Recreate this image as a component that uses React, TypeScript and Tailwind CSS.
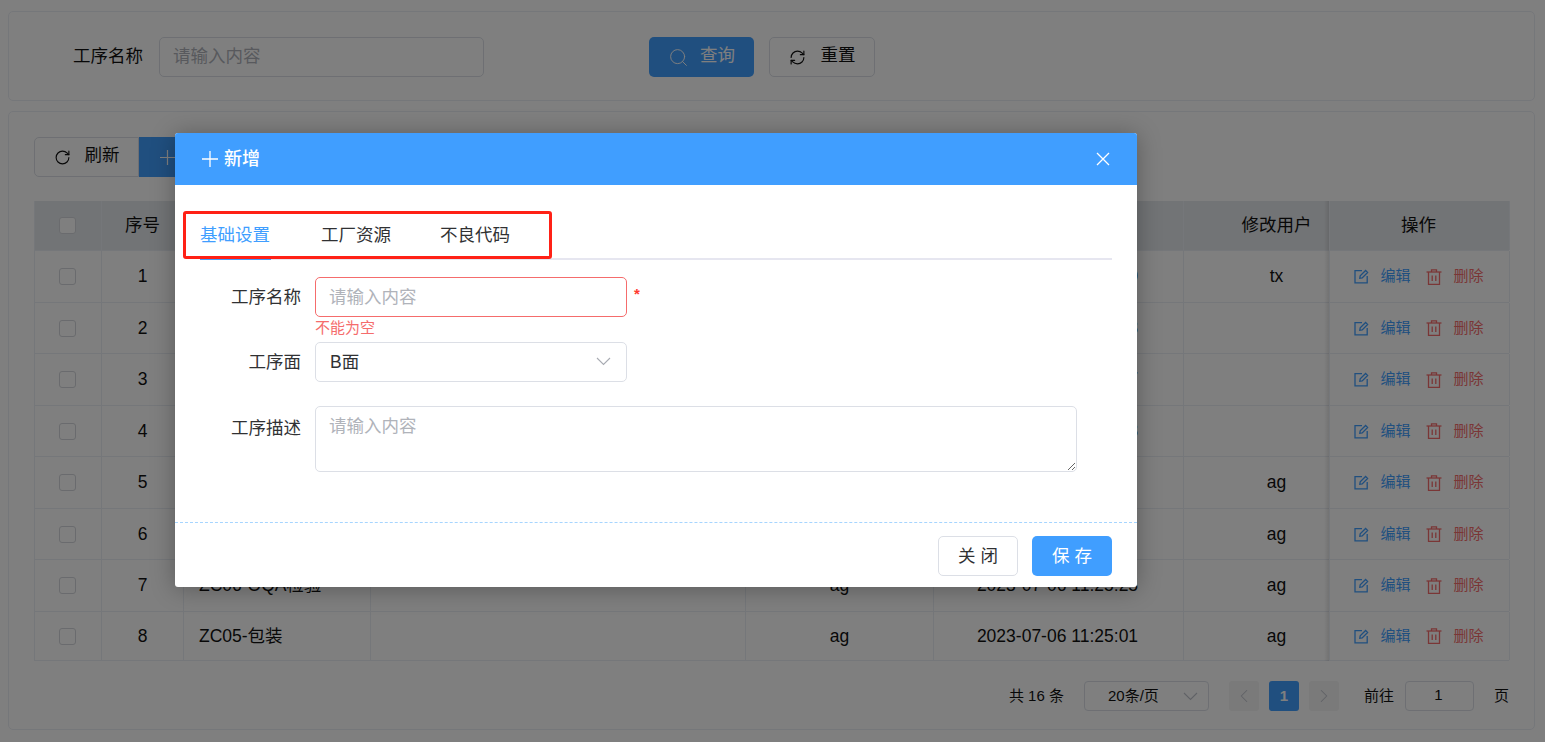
import { ChevronLeft, ChevronRight, RefreshCw, RotateCw, Search } from "lucide-react"

const rows = [
  { no: 1, name: "", time: "2023-07-06 11:26:10", user: "", editor: "tx" },
  { no: 2, name: "", time: "2023-07-06 11:26:08", user: "", editor: "" },
  { no: 3, name: "", time: "2023-07-06 11:26:07", user: "", editor: "" },
  { no: 4, name: "", time: "2023-07-06 11:26:08", user: "", editor: "" },
  { no: 5, name: "", time: "", user: "", editor: "ag" },
  { no: 6, name: "", time: "", user: "", editor: "ag" },
  { no: 7, name: "ZC06-OQA检验", time: "2023-07-06 11:25:25", user: "ag", editor: "ag" },
  { no: 8, name: "ZC05-包装", time: "2023-07-06 11:25:01", user: "ag", editor: "ag" },
]

const rowHeights = ["h-[52px]", "h-[51px]", "h-[52px]", "h-[51px]", "h-[52px]", "h-[51px]", "h-[52px]", "h-[49px]"]

const gridCols = "grid grid-cols-[67px_82px_187px_375px_188px_250px_146px_180px]"
const cell = "flex items-center justify-center border-r border-[#ebeef5] min-w-0"

function Checkbox() {
  return <span className="block w-[17px] h-[17px] rounded-[3px] border border-[#d4d7dc] bg-white" />
}

function PlusIcon({ size }: { size: number }) {
  return (
    <svg width={size} height={size} viewBox="0 0 16 16" fill="none" stroke="currentColor" strokeWidth="1.3" className="shrink-0">
      <path d="M8 0v16M0 8h16" />
    </svg>
  )
}

function CloseIcon() {
  return (
    <svg width="14" height="14" viewBox="0 0 14 14" fill="none" stroke="currentColor" strokeWidth="1.3" className="shrink-0">
      <path d="M1 1l12 12M13 1L1 13" />
    </svg>
  )
}

function ArrowDown() {
  return (
    <svg width="15" height="9" viewBox="0 0 15 9" fill="none" stroke="currentColor" strokeWidth="1.1" className="shrink-0">
      <path d="M1 1l6.500 6.500L14 1" />
    </svg>
  )
}

function EditIcon() {
  return (
    <svg width="15" height="15" viewBox="0 0 15 15" fill="none" stroke="currentColor" strokeWidth="1.3" className="shrink-0">
      <path d="M8 1.700H1v12.200h12.200V7" />
      <path d="M5.800 9.200l.4-2.300 5.400-5.400 2 2-5.400 5.400z" />
    </svg>
  )
}

function TrashIcon() {
  return (
    <svg width="16" height="16" viewBox="0 0 16 16" fill="none" stroke="currentColor" strokeWidth="1.3" className="shrink-0">
      <path d="M0.500 3h15" />
      <path d="M5.500 3V0.800h5V3" />
      <path d="M2.500 3v12.300h11V3" />
      <path d="M6.200 6.500v5.500M9.800 6.500v5.500" />
    </svg>
  )
}

function Actions() {
  return (
    <div className="flex items-center text-[15px] pr-[1px]">
      <span className="flex items-center text-[#409eff]">
        <EditIcon />
        <span className="ml-[11px]">编辑</span>
      </span>
      <span className="flex items-center text-[#f56c6c] ml-[15px]">
        <TrashIcon />
        <span className="ml-[12px]">删除</span>
      </span>
    </div>
  )
}

export default function App() {
  return (
    <div className="relative h-[742px] w-[1545px] overflow-hidden bg-white px-2 pt-[11px] text-[17.5px] text-[#111] font-['Liberation_Sans','Noto_Sans_CJK_SC',sans-serif]">
      {/* Search card */}
      <div className="flex items-center h-[90px] w-[1527px] rounded-[5px] border border-[#ebeef5] pl-[64px] pt-[2px]">
        <label className="w-[71px] mb-[2px]">工序名称</label>
        <input
          placeholder="请输入内容"
          className="ml-[15px] h-[40px] w-[325px] rounded-[5px] border border-[#dcdfe6] bg-white pl-[13px] pb-[2px] outline-none placeholder:text-[#b0b3ba]"
        />
        <button className="ml-[165px] flex items-center justify-center h-[40px] w-[105px] rounded-[5px] bg-[#409eff] text-white">
          <Search size={21} strokeWidth={1.1} className="mr-[11px]" />
          <span className="mb-[3px]">查询</span>
        </button>
        <button className="ml-[15px] flex items-center justify-center h-[40px] w-[106px] rounded-[5px] border border-[#dcdfe6] bg-white">
          <RefreshCw size={17} strokeWidth={1.6} className="mr-[15px]" />
          <span className="mb-[3px]">重置</span>
        </button>
      </div>

      {/* Table card */}
      <div className="mt-[10px] h-[619px] w-[1527px] rounded-[5px] border border-[#ebeef5] px-[25px] pt-[25px]">
        <div className="flex h-[40px]">
          <button className="flex items-center justify-center h-[40px] w-[105px] rounded-l-[5px] border border-[#dcdfe6] bg-white">
            <RotateCw size={17} strokeWidth={1.6} className="mr-[14px]" />
            <span className="mb-[3px]">刷新</span>
          </button>
          <button className="flex items-center justify-center h-[40px] w-[105px] bg-[#409eff] text-white">
            <PlusIcon size={15} />
            <span className="ml-[14px] mb-[3px]">新增</span>
          </button>
        </div>

        {/* Table */}
        <div className="relative mt-[24px] w-[1475px] border-l border-[#ebeef5]">
          <div className={`${gridCols} h-[50px] bg-[#e5e8ec] border-b border-[#ebeef5]`}>
            <div className={`${cell} pr-[1px]`}>
              <Checkbox />
            </div>
            <div className={cell}>序号</div>
            <div className={cell} />
            <div className={cell} />
            <div className={cell} />
            <div className={cell} />
            <div className={`${cell} pl-[40px] whitespace-nowrap`}>修改用户</div>
            <div className={`${cell} pr-[2px]`}>操作</div>
          </div>
          {rows.map((row, i) => (
            <div key={row.no} className={`${gridCols} ${rowHeights[i]} border-b border-[#ebeef5]`}>
              <div className={`${cell} pr-[1px]`}>
                <Checkbox />
              </div>
              <div className={cell}>{row.no}</div>
              <div className={`${cell} justify-start pl-[15px] whitespace-nowrap`}>{row.name}</div>
              <div className={cell} />
              <div className={cell}>{row.user}</div>
              <div className={`${cell} whitespace-nowrap pr-[2px]`}>{row.time}</div>
              <div className={`${cell} pl-[40px]`}>{row.editor}</div>
              <div className={cell}>
                <Actions />
              </div>
            </div>
          ))}
          {/* Shadow of the fixed column */}
          <div className="absolute top-0 bottom-0 right-[180px] w-[5px] bg-gradient-to-l from-black/10 to-transparent" />
        </div>

        {/* Pagination */}
        <div className="mt-[20px] flex items-center justify-end w-[1475px] h-[30px] text-[15px]">
          <span className="whitespace-pre">共 16 条</span>
          <div className="ml-[20px] flex items-center h-[30px] w-[125px] rounded-[4px] border border-[#dcdfe6] pl-[23px] pr-[10px]">
            <span>20条/页</span>
            <span className="ml-auto text-[#c0c4cc]">
              <ArrowDown />
            </span>
          </div>
          <span className="ml-[20px] flex items-center justify-center h-[30px] w-[30px] rounded-[3px] bg-[#f4f4f5] text-[#c0c4cc]">
            <ChevronLeft size={22} strokeWidth={1.1} />
          </span>
          <span className="ml-[10px] flex items-center justify-center h-[30px] w-[30px] rounded-[3px] bg-[#409eff] text-white font-bold">
            1
          </span>
          <span className="ml-[10px] flex items-center justify-center h-[30px] w-[30px] rounded-[3px] bg-[#f4f4f5] text-[#c0c4cc]">
            <ChevronRight size={22} strokeWidth={1.1} />
          </span>
          <span className="ml-[25px]">前往</span>
          <span className="ml-[11px] flex items-center justify-center h-[30px] w-[69px] rounded-[4px] border border-[#dcdfe6] pb-[2px] pr-[2px]">1</span>
          <span className="ml-[20px]">页</span>
        </div>
      </div>

      {/* Mask */}
      <div className="absolute inset-0 bg-black/50" />

      {/* Dialog */}
      <div className="absolute left-[175px] top-[133px] flex flex-col w-[962px] h-[454px] rounded-[3px] bg-white shadow-[0_2px_24px_rgba(0,0,0,0.3)]">
        <div className="flex items-center h-[52px] rounded-t-[3px] bg-[#409eff] pl-[27px] pr-[27px] text-white">
          <PlusIcon size={16} />
          <span className="ml-[6px] text-[18px] font-medium">新增</span>
          <span className="ml-auto">
            <CloseIcon />
          </span>
        </div>

        <div className="flex-1 px-[25px] pt-[25px]">
          <div className="flex h-[50px] w-[912px] border-b-2 border-[#e6e6f0]">
            <div className="flex items-center w-[71px] h-[50px] pt-[2px] whitespace-nowrap text-[#409eff] border-b-2 border-[#409eff]">基础设置</div>
            <div className="ml-[50px] flex items-center w-[70px] h-[48px] pt-[2px] whitespace-nowrap text-[#303133]">工厂资源</div>
            <div className="ml-[49px] flex items-center w-[70px] h-[48px] pt-[2px] whitespace-nowrap text-[#303133]">不良代码</div>
          </div>

          <div className="mt-[17px] flex items-center">
            <label className="w-[101px] text-right text-[#303133]">工序名称</label>
            <input
              placeholder="请输入内容"
              className="ml-[14px] h-[40px] w-[312px] rounded-[5px] border border-[#f56c6c] pl-[13px] outline-none placeholder:text-[#b0b3ba]"
            />
            <span className="ml-[7px] mb-[6px] text-[15px] font-bold text-[#ff3b30]">*</span>
          </div>
          <div className="h-[25px] pl-[115px] text-[15px] leading-[22px] text-[#f56c6c]">不能为空</div>

          <div className="flex items-center">
            <label className="w-[101px] text-right text-[#303133]">工序面</label>
            <div className="ml-[14px] flex items-center h-[40px] w-[312px] rounded-[5px] border border-[#dcdfe6] pl-[14px] pr-[15px] text-[#303133]">
              <span className="pt-[1px]">B面</span>
              <span className="ml-auto mb-[2px] text-[#a8abb2]">
                <ArrowDown />
              </span>
            </div>
          </div>

          <div className="mt-[24px] flex items-start">
            <label className="w-[101px] pt-[9px] text-right text-[#303133]">工序描述</label>
            <textarea
              placeholder="请输入内容"
              className="ml-[14px] h-[66px] w-[762px] rounded-[5px] border border-[#dcdfe6] px-[13px] py-[6px] outline-none resize-y placeholder:text-[#b0b3ba]"
            />
          </div>
        </div>

        <div className="flex items-start justify-end h-[65px] border-t border-dashed border-[#a6d5ff] pt-[13px] pr-[25px]">
          <button className="h-[40px] w-[80px] rounded-[5px] border border-[#dcdfe6] bg-white text-[#303133] whitespace-pre">关 闭</button>
          <button className="ml-[14px] h-[40px] w-[80px] rounded-[5px] bg-[#409eff] text-white whitespace-pre">保 存</button>
        </div>

        {/* Annotation box round the tabs */}
        <div className="absolute left-[8px] top-[78px] w-[369px] h-[48px] rounded-[3px] border-[3.5px] border-[#ff2116]" />
      </div>
    </div>
  )
}
